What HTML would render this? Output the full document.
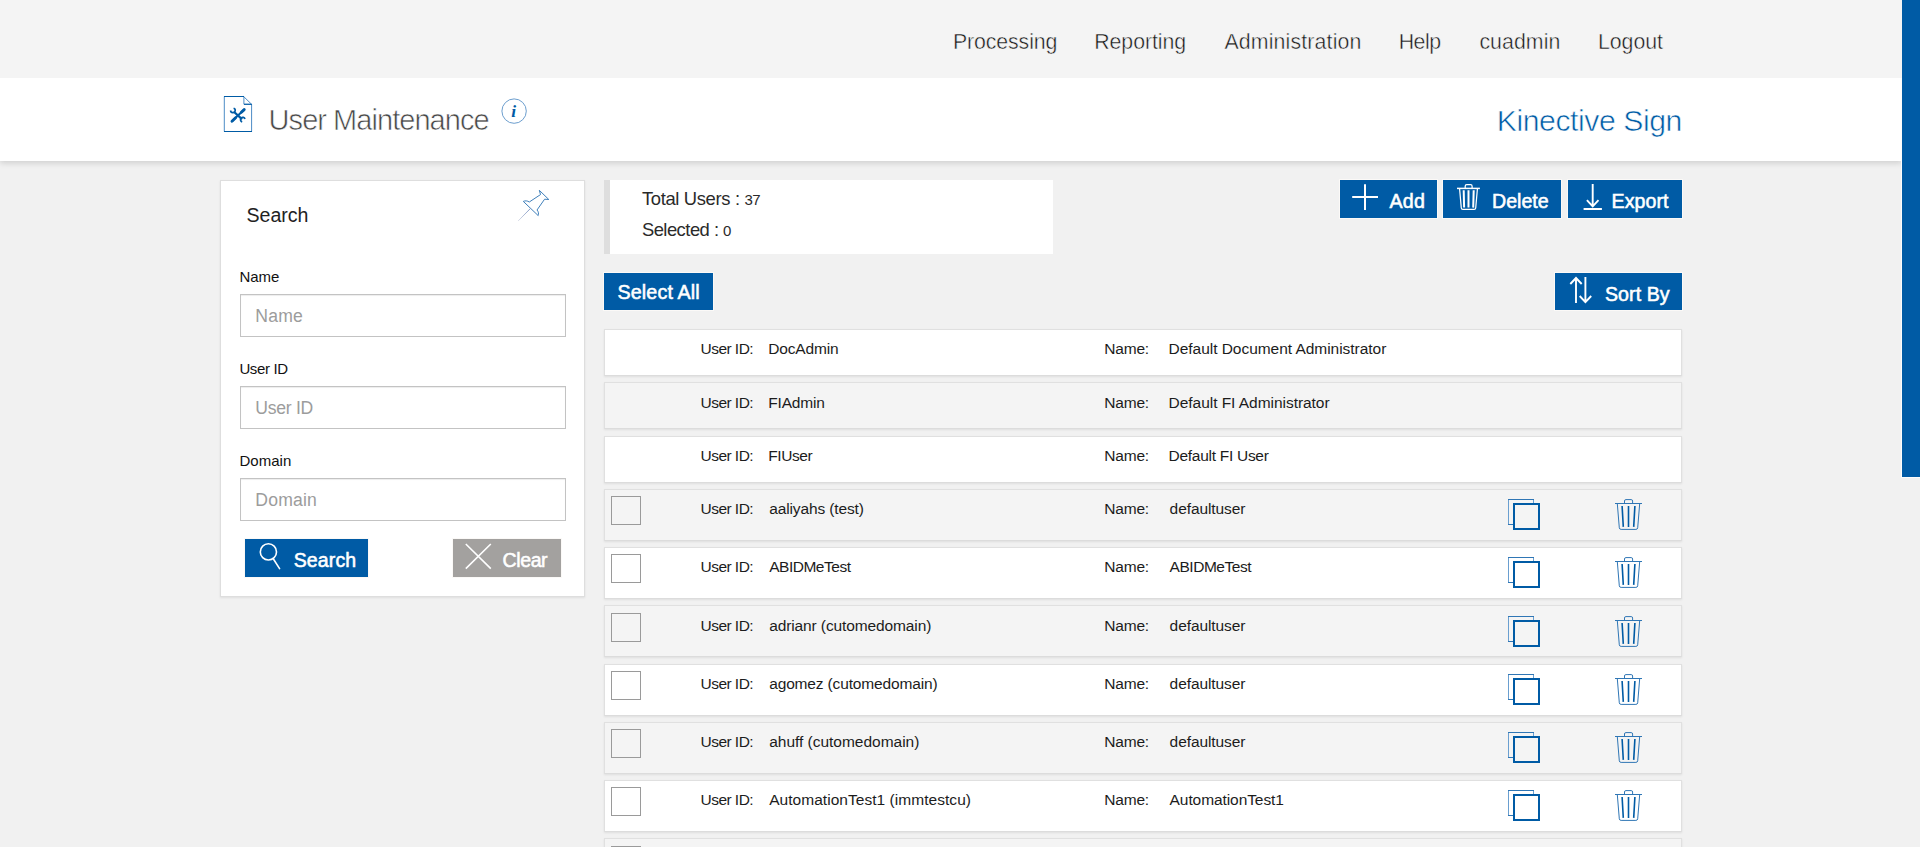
<!DOCTYPE html>
<html lang="en"><head><meta charset="utf-8"><title>User Maintenance - Kinective Sign</title>
<style>
*{box-sizing:border-box;margin:0;padding:0}
html,body{width:1920px;height:847px;overflow:hidden}
body{position:relative;background:#f1f1f1;font-family:"Liberation Sans",sans-serif;color:#222}
.t{position:absolute;white-space:nowrap;line-height:1;display:block;text-decoration:none;font-weight:400}
.abs{position:absolute}
nav{position:absolute;left:0;top:0;width:1902px;height:78px;background:#f4f4f4;z-index:2}
header{position:absolute;left:0;top:78px;width:1902px;height:83px;background:#fff;box-shadow:0 2px 6px rgba(0,0,0,.15)}
.scroll{position:absolute;left:1901px;top:0;width:19px;height:847px;background:#f1f1f1}
.thumb{position:absolute;left:0;top:-1px;width:20px;height:479px;background:#005ba5;border:1px solid #fcfcfc}
aside{position:absolute;left:220px;top:180px;width:365px;height:417px;background:#fff;border:1px solid #dedede;box-shadow:0 1px 2px rgba(0,0,0,.08)}
.inp{position:absolute;left:19px;width:326px;height:43px;border:1px solid #c3c3c3;border-radius:0;outline:0;background:#fff;box-shadow:inset 0 1px 1px rgba(0,0,0,.075);font:17.6px/normal "Liberation Sans",sans-serif;color:#333;padding:1px 4px 0 0}
.inp::placeholder{color:#9c9c9c;opacity:1}
.btn{position:absolute;display:block;background:#005ba5;height:38px;box-shadow:0 0 0 1px #fbf9f7;border:0;border-radius:0;padding:0;margin:0;font:inherit;color:#fff;text-align:left;overflow:visible}
.btn.gray{background:#a3a19f}
.stats{position:absolute;left:604px;top:180px;width:449px;height:74px;background:#fff;border-left:6px solid #dedede}
.row{position:absolute;left:604px;width:1078px;border:1px solid #e0e0e0;border-bottom-color:#dcdcdc;background:#fff;box-shadow:0 1px 2px rgba(0,0,0,.08)}
.row.alt{background:#f4f4f4}
.cb{position:absolute;left:6px;top:6px;width:30px;height:29px;border:1px solid #9a9a9a;border-radius:0;margin:0;background:transparent;-webkit-appearance:none;appearance:none;outline:0}
svg{position:absolute;overflow:visible}
</style></head>
<body>
<nav>
<a class="t" style="left:953.00px;top:32.00px;font-size:21.3px;letter-spacing:-0.112px;color:#161616;-webkit-text-stroke:0.45px #f4f4f4;">Processing</a>
<a class="t" style="left:1094.25px;top:32.00px;font-size:21.3px;letter-spacing:-0.062px;color:#161616;-webkit-text-stroke:0.45px #f4f4f4;">Reporting</a>
<a class="t" style="left:1224.40px;top:32.00px;font-size:21.3px;letter-spacing:0.162px;color:#161616;-webkit-text-stroke:0.45px #f4f4f4;">Administration</a>
<a class="t" style="left:1398.70px;top:32.00px;font-size:21.3px;letter-spacing:-0.452px;color:#161616;-webkit-text-stroke:0.45px #f4f4f4;">Help</a>
<a class="t" style="left:1479.40px;top:32.00px;font-size:21.3px;letter-spacing:0.074px;color:#161616;-webkit-text-stroke:0.45px #f4f4f4;">cuadmin</a>
<a class="t" style="left:1598.00px;top:32.00px;font-size:21.3px;letter-spacing:-0.044px;color:#161616;-webkit-text-stroke:0.45px #f4f4f4;">Logout</a>
</nav>
<header>
<svg style="left:223px;top:17px" width="30" height="38" viewBox="223 95 30 38" fill="none">
<path d="M224.3 96.5 H243.6 L251.6 104.3 V131.5 H224.3 Z" fill="#fff" stroke="#4d8cc6" stroke-width="1"/>
<path d="M243.9 96.8 V104.2 H251.4" stroke="#4d8cc6" stroke-width="1"/>
<path d="M224 96.5 H244 M224 131.5 H252 M244 104.3 H252" stroke="#005ba5" stroke-width="1"/>
<g stroke="#005ba5" stroke-linecap="round">
<path d="M232.2 121 L244 109.8" stroke-width="2.1"/>
<path d="M232 121.2 L235.6 117.8" stroke-width="2.9"/>
<path d="M241.4 112.2 L244.2 109.6" stroke-width="2.9"/>
<path d="M234.4 112.2 L241.4 118.6" stroke-width="2.2"/>
<path d="M230.6 110.5 A2.3 2.3 0 1 0 233.6 108.2" stroke-width="1.7" stroke-linecap="butt"/>
<path d="M245 119 A2.3 2.3 0 1 0 242.2 121.9" stroke-width="1.7" stroke-linecap="butt"/>
</g></svg>
<h1 class="t" style="left:268.60px;top:28.00px;font-size:29px;letter-spacing:-0.954px;color:#474747;-webkit-text-stroke:0.6px #fff;">User Maintenance</h1>
<div class="t" style="left:1496.75px;top:28.00px;font-size:30.2px;letter-spacing:-0.435px;color:#005ba5;-webkit-text-stroke:0.6px #fff;">Kinective Sign</div>
<svg style="left:500px;top:19px" width="29" height="29" viewBox="500 97 29 29" fill="none"><circle cx="514.1" cy="111.1" r="12.2" stroke="#6c9ece" stroke-width="1"/></svg>
<span class="t" style="left:511.25px;top:25.00px;font-size:17.5px;letter-spacing:0.000px;color:#005ba5;font-weight:700;font-family:'Liberation Serif',serif;font-style:italic;">i</span>
</header>
<div class="scroll"><div class="thumb"></div></div>
<aside>
<h2 class="t" style="left:25.50px;top:25.00px;font-size:19.6px;letter-spacing:-0.037px;color:#222;">Search</h2>
<svg style="left:297px;top:8px" width="32" height="33" viewBox="518 189 32 33" fill="none" stroke="#3f80bb" stroke-width="1" stroke-linejoin="round" stroke-linecap="round">
<path d="M539.6 190.6 L548.8 199.5 L544.6 199.2 L537 210 C538.6 211.6 538.8 214 538.2 215.6 L523.3 201.4 C525 200.6 527.4 200.6 529.3 202 L540.2 194.8 Z"/>
<defs><linearGradient id="ng" x1="530.3" y1="208.6" x2="518.4" y2="220.7" gradientUnits="userSpaceOnUse"><stop offset="0" stop-color="#7f97c4"/><stop offset="1" stop-color="#d9dde8"/></linearGradient></defs><path d="M530.3 208.6 L518.4 220.7" stroke="url(#ng)" stroke-width="1"/>
</svg>
<label class="t" for="f0" style="left:18.40px;top:88.00px;font-size:15px;letter-spacing:0.010px;color:#111;">Name</label>
<label class="t" for="f1" style="left:18.40px;top:180.00px;font-size:15px;letter-spacing:-0.367px;color:#111;">User ID</label>
<label class="t" for="f2" style="left:18.40px;top:272.00px;font-size:15px;letter-spacing:0.031px;color:#111;">Domain</label>
<input class="inp" type="text" id="f0" placeholder="Name" style="top:113px;padding-left:14.30px;letter-spacing:0.218px">
<input class="inp" type="text" id="f1" placeholder="User ID" style="top:205px;padding-left:14.30px;letter-spacing:-0.287px">
<input class="inp" type="text" id="f2" placeholder="Domain" style="top:297px;padding-left:14.30px;letter-spacing:0.172px">
<button type="button" class="btn" style="left:24px;top:358px;width:123px">
<svg style="left:13px;top:3px" width="24" height="28" viewBox="258 542 24 28" fill="none" stroke="#fff" stroke-width="1.6" stroke-linecap="round"><circle cx="268.4" cy="551.9" r="8.1"/><path d="M273.4 559 L279.6 568.6"/></svg>
<span class="t" style="left:48.75px;top:12.00px;font-size:19.5px;letter-spacing:0.112px;color:#fff;-webkit-text-stroke:0.55px #fff;">Search</span>
</button>
<button type="button" class="btn gray" style="left:232px;top:358px;width:108px">
<svg style="left:12px;top:4px" width="27" height="27" viewBox="465 543 27 27" fill="none" stroke="#fff" stroke-width="1.6" stroke-linecap="butt"><path d="M465.8 544 L490.8 568.6 M490.8 544 L465.8 568.6"/></svg>
<span class="t" style="left:49.50px;top:12.00px;font-size:19.5px;letter-spacing:-0.376px;color:#fff;-webkit-text-stroke:0.55px #fff;">Clear</span>
</button>
</aside>
<main>
<div class="stats">
<span class="t" style="left:31.90px;top:10.00px;font-size:18.4px;letter-spacing:-0.341px;color:#2a2a2a;">Total Users :</span>
<span class="t" style="left:134.40px;top:12.00px;font-size:15px;letter-spacing:-0.492px;color:#2a2a2a;">37</span>
<span class="t" style="left:31.90px;top:41.00px;font-size:18.4px;letter-spacing:-0.520px;color:#2a2a2a;">Selected :</span>
<span class="t" style="left:113.10px;top:43.00px;font-size:15px;letter-spacing:0.000px;color:#2a2a2a;">0</span>
</div>
<button type="button" class="btn" style="left:1340px;top:180px;width:97px;height:38px"><svg style="left:12px;top:4px" width="26" height="26" viewBox="1352 184 26 26" stroke="#fff" stroke-width="2" fill="none"><path d="M1352.2 197 H1378 M1365 184.3 V210"/></svg><span class="t" style="left:49.40px;top:12.00px;font-size:19.6px;letter-spacing:0.317px;color:#fff;-webkit-text-stroke:0.55px #fff;">Add</span></button>
<button type="button" class="btn" style="left:1443px;top:180px;width:118px;height:38px"><svg style="left:14px;top:4px" width="23" height="27" viewBox="1457 184 23 27" stroke="#fff" stroke-width="1.25" fill="none" stroke-linejoin="round"><path d="M1457 188.4 H1479.9" stroke-width="1.5"/><path d="M1465.2 188.3 V186.2 Q1465.2 184.7 1466.7 184.7 H1470.6 Q1472.1 184.7 1472.1 186.2 V188.3"/><path d="M1459.6 189 L1461.3 208 Q1461.4 209.3 1462.8 209.3 H1474.2 Q1475.6 209.3 1475.7 208 L1477.4 189"/><path d="M1463.7 190.3 L1464.1 207.6 M1468.5 190.3 V207.6 M1473.7 190.3 L1473.2 207.6" stroke-width="2"/></svg><span class="t" style="left:49.10px;top:12.00px;font-size:19.6px;letter-spacing:-0.018px;color:#fff;-webkit-text-stroke:0.55px #fff;">Delete</span></button>
<button type="button" class="btn" style="left:1568px;top:180px;width:114px;height:38px"><svg style="left:15px;top:4px" width="20" height="27" viewBox="1583 184 20 27" stroke="#fff" stroke-width="1.9" fill="none"><path d="M1592.7 184 V206 M1586.9 200.2 L1592.7 206.3 L1598.5 200.2 M1583.6 209 H1601.9"/></svg><span class="t" style="left:43.50px;top:12.00px;font-size:19.6px;letter-spacing:0.063px;color:#fff;-webkit-text-stroke:0.55px #fff;">Export</span></button>
<button type="button" class="btn" style="left:604px;top:273px;width:109px;height:37px"><span class="t" style="left:13.50px;top:10.00px;font-size:19.7px;letter-spacing:0.134px;color:#fff;-webkit-text-stroke:0.55px #fff;">Select All</span></button>
<button type="button" class="btn" style="left:1555px;top:273px;width:127px;height:37px"><svg style="left:15px;top:4px" width="23" height="27" viewBox="1570 277 23 27" stroke="#fff" stroke-width="1.9" fill="none"><path d="M1576 302.9 V278.4 M1570.3 284 L1576 278 L1581.7 284 M1585.4 277 V302 M1579.7 296 L1585.4 302.2 L1591.2 296"/></svg><span class="t" style="left:50.00px;top:12.00px;font-size:19.6px;letter-spacing:0.050px;color:#fff;-webkit-text-stroke:0.55px #fff;">Sort By</span></button>
<div class="row" style="top:329px;height:47px">
<span class="t" style="left:95.50px;top:11.00px;font-size:15.5px;letter-spacing:-0.533px;color:#1c1c1c;">User ID:</span>
<span class="t" style="left:163.20px;top:11.00px;font-size:15.5px;letter-spacing:-0.154px;color:#1c1c1c;">DocAdmin</span>
<span class="t" style="left:499.30px;top:11.00px;font-size:15.5px;letter-spacing:-0.211px;color:#1c1c1c;">Name:</span>
<span class="t" style="left:563.60px;top:11.00px;font-size:15.5px;letter-spacing:-0.038px;color:#1c1c1c;">Default Document Administrator</span>
</div>
<div class="row alt" style="top:382px;height:47px">
<span class="t" style="left:95.50px;top:12.00px;font-size:15.5px;letter-spacing:-0.533px;color:#1c1c1c;">User ID:</span>
<span class="t" style="left:163.20px;top:12.00px;font-size:15.5px;letter-spacing:-0.165px;color:#1c1c1c;">FIAdmin</span>
<span class="t" style="left:499.30px;top:12.00px;font-size:15.5px;letter-spacing:-0.211px;color:#1c1c1c;">Name:</span>
<span class="t" style="left:563.60px;top:12.00px;font-size:15.5px;letter-spacing:-0.041px;color:#1c1c1c;">Default FI Administrator</span>
</div>
<div class="row" style="top:436px;height:47px">
<span class="t" style="left:95.50px;top:11.00px;font-size:15.5px;letter-spacing:-0.533px;color:#1c1c1c;">User ID:</span>
<span class="t" style="left:163.20px;top:11.00px;font-size:15.5px;letter-spacing:-0.408px;color:#1c1c1c;">FIUser</span>
<span class="t" style="left:499.30px;top:11.00px;font-size:15.5px;letter-spacing:-0.211px;color:#1c1c1c;">Name:</span>
<span class="t" style="left:563.60px;top:11.00px;font-size:15.5px;letter-spacing:-0.283px;color:#1c1c1c;">Default FI User</span>
</div>
<div class="row alt" style="top:489px;height:52px">
<input type="checkbox" class="cb">
<span class="t" style="left:95.50px;top:11.00px;font-size:15.5px;letter-spacing:-0.533px;color:#1c1c1c;">User ID:</span>
<span class="t" style="left:164.20px;top:11.00px;font-size:15.5px;letter-spacing:-0.123px;color:#1c1c1c;">aaliyahs (test)</span>
<span class="t" style="left:499.30px;top:11.00px;font-size:15.5px;letter-spacing:-0.211px;color:#1c1c1c;">Name:</span>
<span class="t" style="left:564.60px;top:11.00px;font-size:15.5px;letter-spacing:-0.088px;color:#1c1c1c;">defaultuser</span>
<svg style="left:902px;top:8px" width="34" height="34" viewBox="1507 498 34 34" fill="none"><path d="M1508.5 499.5 V524.5 M1533.5 499.5 V504" stroke="#6a9fd0" stroke-width="1"/><path d="M1508 499.5 H1534 M1508 524.5 H1514" stroke="#2f76b5" stroke-width="1"/><rect x="1514" y="504" width="25" height="25" stroke-width="2" stroke="#005ba5" fill="#f4f4f4"/></svg>
<svg style="left:1009px;top:8px" width="29" height="34" viewBox="1614 498 29 34" fill="none" stroke="#2f76b5" stroke-width="1" stroke-linejoin="round"><path d="M1615 503.5 H1642"/><path d="M1624.5 503.5 V501 Q1624.5 499.6 1625.9 499.6 H1631.2 Q1632.6 499.6 1632.6 501 V503.5"/><path d="M1617.3 503.6 L1619.3 527.8 Q1619.5 529.4 1621.1 529.4 H1635.9 Q1637.5 529.4 1637.7 527.8 L1639.7 503.6"/><path d="M1622.1 506 L1623.3 526.9 M1628.5 506 V526.9 M1634.9 506 L1633.7 526.9" stroke="#005ba5" stroke-width="1.6"/></svg>
</div>
<div class="row" style="top:547px;height:52px">
<input type="checkbox" class="cb">
<span class="t" style="left:95.50px;top:11.00px;font-size:15.5px;letter-spacing:-0.533px;color:#1c1c1c;">User ID:</span>
<span class="t" style="left:164.20px;top:11.00px;font-size:15.5px;letter-spacing:-0.481px;color:#1c1c1c;">ABIDMeTest</span>
<span class="t" style="left:499.30px;top:11.00px;font-size:15.5px;letter-spacing:-0.211px;color:#1c1c1c;">Name:</span>
<span class="t" style="left:564.60px;top:11.00px;font-size:15.5px;letter-spacing:-0.464px;color:#1c1c1c;">ABIDMeTest</span>
<svg style="left:902px;top:8px" width="34" height="34" viewBox="1507 498 34 34" fill="none"><path d="M1508.5 499.5 V524.5 M1533.5 499.5 V504" stroke="#6a9fd0" stroke-width="1"/><path d="M1508 499.5 H1534 M1508 524.5 H1514" stroke="#2f76b5" stroke-width="1"/><rect x="1514" y="504" width="25" height="25" stroke-width="2" stroke="#005ba5" fill="#fff"/></svg>
<svg style="left:1009px;top:8px" width="29" height="34" viewBox="1614 498 29 34" fill="none" stroke="#2f76b5" stroke-width="1" stroke-linejoin="round"><path d="M1615 503.5 H1642"/><path d="M1624.5 503.5 V501 Q1624.5 499.6 1625.9 499.6 H1631.2 Q1632.6 499.6 1632.6 501 V503.5"/><path d="M1617.3 503.6 L1619.3 527.8 Q1619.5 529.4 1621.1 529.4 H1635.9 Q1637.5 529.4 1637.7 527.8 L1639.7 503.6"/><path d="M1622.1 506 L1623.3 526.9 M1628.5 506 V526.9 M1634.9 506 L1633.7 526.9" stroke="#005ba5" stroke-width="1.6"/></svg>
</div>
<div class="row alt" style="top:605px;height:52px">
<input type="checkbox" class="cb" style="top:7px">
<span class="t" style="left:95.50px;top:12.00px;font-size:15.5px;letter-spacing:-0.533px;color:#1c1c1c;">User ID:</span>
<span class="t" style="left:164.20px;top:12.00px;font-size:15.5px;letter-spacing:-0.113px;color:#1c1c1c;">adrianr (cutomedomain)</span>
<span class="t" style="left:499.30px;top:12.00px;font-size:15.5px;letter-spacing:-0.211px;color:#1c1c1c;">Name:</span>
<span class="t" style="left:564.60px;top:12.00px;font-size:15.5px;letter-spacing:-0.088px;color:#1c1c1c;">defaultuser</span>
<svg style="left:902px;top:9px" width="34" height="34" viewBox="1507 498 34 34" fill="none"><path d="M1508.5 499.5 V524.5 M1533.5 499.5 V504" stroke="#6a9fd0" stroke-width="1"/><path d="M1508 499.5 H1534 M1508 524.5 H1514" stroke="#2f76b5" stroke-width="1"/><rect x="1514" y="504" width="25" height="25" stroke-width="2" stroke="#005ba5" fill="#f4f4f4"/></svg>
<svg style="left:1009px;top:9px" width="29" height="34" viewBox="1614 498 29 34" fill="none" stroke="#2f76b5" stroke-width="1" stroke-linejoin="round"><path d="M1615 503.5 H1642"/><path d="M1624.5 503.5 V501 Q1624.5 499.6 1625.9 499.6 H1631.2 Q1632.6 499.6 1632.6 501 V503.5"/><path d="M1617.3 503.6 L1619.3 527.8 Q1619.5 529.4 1621.1 529.4 H1635.9 Q1637.5 529.4 1637.7 527.8 L1639.7 503.6"/><path d="M1622.1 506 L1623.3 526.9 M1628.5 506 V526.9 M1634.9 506 L1633.7 526.9" stroke="#005ba5" stroke-width="1.6"/></svg>
</div>
<div class="row" style="top:664px;height:52px">
<input type="checkbox" class="cb">
<span class="t" style="left:95.50px;top:11.00px;font-size:15.5px;letter-spacing:-0.533px;color:#1c1c1c;">User ID:</span>
<span class="t" style="left:164.20px;top:11.00px;font-size:15.5px;letter-spacing:-0.149px;color:#1c1c1c;">agomez (cutomedomain)</span>
<span class="t" style="left:499.30px;top:11.00px;font-size:15.5px;letter-spacing:-0.211px;color:#1c1c1c;">Name:</span>
<span class="t" style="left:564.60px;top:11.00px;font-size:15.5px;letter-spacing:-0.088px;color:#1c1c1c;">defaultuser</span>
<svg style="left:902px;top:8px" width="34" height="34" viewBox="1507 498 34 34" fill="none"><path d="M1508.5 499.5 V524.5 M1533.5 499.5 V504" stroke="#6a9fd0" stroke-width="1"/><path d="M1508 499.5 H1534 M1508 524.5 H1514" stroke="#2f76b5" stroke-width="1"/><rect x="1514" y="504" width="25" height="25" stroke-width="2" stroke="#005ba5" fill="#fff"/></svg>
<svg style="left:1009px;top:8px" width="29" height="34" viewBox="1614 498 29 34" fill="none" stroke="#2f76b5" stroke-width="1" stroke-linejoin="round"><path d="M1615 503.5 H1642"/><path d="M1624.5 503.5 V501 Q1624.5 499.6 1625.9 499.6 H1631.2 Q1632.6 499.6 1632.6 501 V503.5"/><path d="M1617.3 503.6 L1619.3 527.8 Q1619.5 529.4 1621.1 529.4 H1635.9 Q1637.5 529.4 1637.7 527.8 L1639.7 503.6"/><path d="M1622.1 506 L1623.3 526.9 M1628.5 506 V526.9 M1634.9 506 L1633.7 526.9" stroke="#005ba5" stroke-width="1.6"/></svg>
</div>
<div class="row alt" style="top:722px;height:52px">
<input type="checkbox" class="cb">
<span class="t" style="left:95.50px;top:11.00px;font-size:15.5px;letter-spacing:-0.533px;color:#1c1c1c;">User ID:</span>
<span class="t" style="left:164.20px;top:11.00px;font-size:15.5px;letter-spacing:-0.017px;color:#1c1c1c;">ahuff (cutomedomain)</span>
<span class="t" style="left:499.30px;top:11.00px;font-size:15.5px;letter-spacing:-0.211px;color:#1c1c1c;">Name:</span>
<span class="t" style="left:564.60px;top:11.00px;font-size:15.5px;letter-spacing:-0.088px;color:#1c1c1c;">defaultuser</span>
<svg style="left:902px;top:8px" width="34" height="34" viewBox="1507 498 34 34" fill="none"><path d="M1508.5 499.5 V524.5 M1533.5 499.5 V504" stroke="#6a9fd0" stroke-width="1"/><path d="M1508 499.5 H1534 M1508 524.5 H1514" stroke="#2f76b5" stroke-width="1"/><rect x="1514" y="504" width="25" height="25" stroke-width="2" stroke="#005ba5" fill="#f4f4f4"/></svg>
<svg style="left:1009px;top:8px" width="29" height="34" viewBox="1614 498 29 34" fill="none" stroke="#2f76b5" stroke-width="1" stroke-linejoin="round"><path d="M1615 503.5 H1642"/><path d="M1624.5 503.5 V501 Q1624.5 499.6 1625.9 499.6 H1631.2 Q1632.6 499.6 1632.6 501 V503.5"/><path d="M1617.3 503.6 L1619.3 527.8 Q1619.5 529.4 1621.1 529.4 H1635.9 Q1637.5 529.4 1637.7 527.8 L1639.7 503.6"/><path d="M1622.1 506 L1623.3 526.9 M1628.5 506 V526.9 M1634.9 506 L1633.7 526.9" stroke="#005ba5" stroke-width="1.6"/></svg>
</div>
<div class="row" style="top:780px;height:52px">
<input type="checkbox" class="cb">
<span class="t" style="left:95.50px;top:11.00px;font-size:15.5px;letter-spacing:-0.533px;color:#1c1c1c;">User ID:</span>
<span class="t" style="left:164.20px;top:11.00px;font-size:15.5px;letter-spacing:0.041px;color:#1c1c1c;">AutomationTest1 (immtestcu)</span>
<span class="t" style="left:499.30px;top:11.00px;font-size:15.5px;letter-spacing:-0.211px;color:#1c1c1c;">Name:</span>
<span class="t" style="left:564.60px;top:11.00px;font-size:15.5px;letter-spacing:-0.081px;color:#1c1c1c;">AutomationTest1</span>
<svg style="left:902px;top:8px" width="34" height="34" viewBox="1507 498 34 34" fill="none"><path d="M1508.5 499.5 V524.5 M1533.5 499.5 V504" stroke="#6a9fd0" stroke-width="1"/><path d="M1508 499.5 H1534 M1508 524.5 H1514" stroke="#2f76b5" stroke-width="1"/><rect x="1514" y="504" width="25" height="25" stroke-width="2" stroke="#005ba5" fill="#fff"/></svg>
<svg style="left:1009px;top:8px" width="29" height="34" viewBox="1614 498 29 34" fill="none" stroke="#2f76b5" stroke-width="1" stroke-linejoin="round"><path d="M1615 503.5 H1642"/><path d="M1624.5 503.5 V501 Q1624.5 499.6 1625.9 499.6 H1631.2 Q1632.6 499.6 1632.6 501 V503.5"/><path d="M1617.3 503.6 L1619.3 527.8 Q1619.5 529.4 1621.1 529.4 H1635.9 Q1637.5 529.4 1637.7 527.8 L1639.7 503.6"/><path d="M1622.1 506 L1623.3 526.9 M1628.5 506 V526.9 M1634.9 506 L1633.7 526.9" stroke="#005ba5" stroke-width="1.6"/></svg>
</div>
<div class="row alt" style="top:838px;height:52px">
<input type="checkbox" class="cb" style="top:7px">
<svg style="left:902px;top:9px" width="34" height="34" viewBox="1507 498 34 34" fill="none"><path d="M1508.5 499.5 V524.5 M1533.5 499.5 V504" stroke="#6a9fd0" stroke-width="1"/><path d="M1508 499.5 H1534 M1508 524.5 H1514" stroke="#2f76b5" stroke-width="1"/><rect x="1514" y="504" width="25" height="25" stroke-width="2" stroke="#005ba5" fill="#f4f4f4"/></svg>
<svg style="left:1009px;top:9px" width="29" height="34" viewBox="1614 498 29 34" fill="none" stroke="#2f76b5" stroke-width="1" stroke-linejoin="round"><path d="M1615 503.5 H1642"/><path d="M1624.5 503.5 V501 Q1624.5 499.6 1625.9 499.6 H1631.2 Q1632.6 499.6 1632.6 501 V503.5"/><path d="M1617.3 503.6 L1619.3 527.8 Q1619.5 529.4 1621.1 529.4 H1635.9 Q1637.5 529.4 1637.7 527.8 L1639.7 503.6"/><path d="M1622.1 506 L1623.3 526.9 M1628.5 506 V526.9 M1634.9 506 L1633.7 526.9" stroke="#005ba5" stroke-width="1.6"/></svg>
</div>
</main>
</body></html>
